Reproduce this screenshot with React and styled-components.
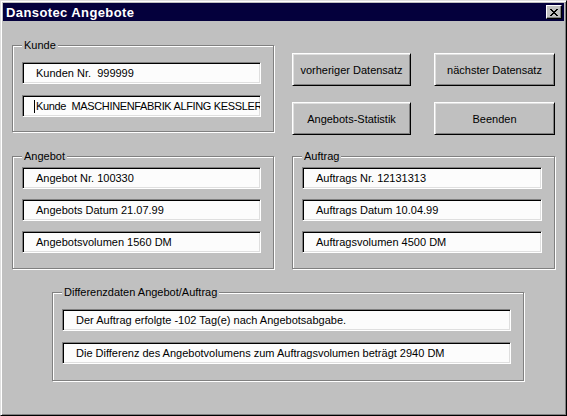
import React from "react";
import styled, { createGlobalStyle } from "styled-components";

const font = `"Liberation Sans", Arial, sans-serif`;

const GlobalStyle = createGlobalStyle`
  html, body {
    margin: 0;
    padding: 0;
    background: #c0c0c0;
  }
`;

const Window = styled.div`
  width: 567px;
  height: 416px;
  box-sizing: border-box;
  background: #c0c0c0;
  border: 1px solid;
  border-color: #dfdfdf #000000 #000000 #dfdfdf;
  box-shadow: inset 1px 1px 0 #ffffff, inset -1px -1px 0 #808080;
  padding: 2px;
  display: flex;
  flex-direction: column;
  font-family: ${font};
  font-size: 11px;
  color: #000000;
`;

const TitleBar = styled.div`
  height: 18px;
  background: #04003c;
  display: flex;
  align-items: center;
  justify-content: space-between;
  padding: 0 2px 0 3px;
`;

const Title = styled.span`
  color: #ffffff;
  font-weight: bold;
  font-size: 13px;
  letter-spacing: 0.4px;
`;

const CloseButton = styled.button`
  width: 16px;
  height: 14px;
  padding: 0;
  box-sizing: border-box;
  background: #c0c0c0;
  border: 1px solid;
  border-color: #ffffff #000000 #000000 #ffffff;
  box-shadow: inset -1px -1px 0 #808080;
  display: flex;
  align-items: center;
  justify-content: center;
`;

const Content = styled.div`
  padding-left: 9px;
  display: flex;
  flex-direction: column;
`;

const Row = styled.div`
  display: flex;
  align-items: flex-start;
  margin-top: ${(p) => p.top || 0}px;
  margin-left: ${(p) => p.left || 0}px;
`;

const GroupBox = styled.div`
  position: relative;
  box-sizing: border-box;
  width: ${(p) => p.w}px;
  height: ${(p) => p.h}px;
  margin-top: ${(p) => p.mt || 0}px;
  margin-left: ${(p) => p.ml || 0}px;
  border: 1px solid #808080;
  box-shadow: 1px 1px 0 #ffffff, inset 1px 1px 0 #ffffff;
  padding: ${(p) => p.pt}px 12px 0 9px;
  display: flex;
  flex-direction: column;
  gap: ${(p) => p.gap}px;
`;

const Legend = styled.span`
  position: absolute;
  top: -7px;
  left: 9px;
  padding: 0 2px;
  line-height: 13px;
  background: #c0c0c0;
`;

const Field = styled.div`
  box-sizing: border-box;
  height: 22px;
  width: 100%;
  background: #fcfcfc;
  border: 1px solid;
  border-color: #808080 #ffffff #ffffff #808080;
  box-shadow: inset 1px 1px 0 #000000, inset -1px -1px 0 #dfdfdf;
  padding-left: 13px;
  display: flex;
  align-items: center;
  white-space: pre;
  overflow: hidden;
  letter-spacing: ${(p) => (p.tight ? "-0.35px" : "normal")};
`;

const Caret = styled.span`
  display: inline-block;
  flex: none;
  width: 1px;
  height: 13px;
  background: #000000;
  margin-left: -2px;
  margin-right: 1px;
`;

const ButtonGrid = styled.div`
  display: grid;
  grid-template-columns: 119px 121px;
  grid-auto-rows: 33px;
  column-gap: 23px;
  row-gap: 16px;
  margin-left: 18px;
  margin-top: 32px;
`;

const Button = styled.button`
  font-family: ${font};
  font-size: 11px;
  color: #000000;
  background: #c0c0c0;
  box-sizing: border-box;
  border: 1px solid;
  border-color: #ffffff #000000 #000000 #ffffff;
  box-shadow: inset 1px 1px 0 #dfdfdf, inset -1px -1px 0 #808080;
  padding: 0;
`;

const App = () => {
  return (
    <>
      <GlobalStyle />
      <Window>
        <TitleBar>
          <Title>Dansotec Angebote</Title>
          <CloseButton aria-label="Schließen">
            <svg width="8" height="7" viewBox="0 0 8 7">
              <path d="M0 0 L7 7 M1 0 L8 7 M7 0 L0 7 M8 0 L1 7" stroke="#000" strokeWidth="1" />
            </svg>
          </CloseButton>
        </TitleBar>
        <Content>
          <Row>
            <GroupBox w={262} h={87} mt={24} pt={16} gap={11}>
              <Legend>Kunde</Legend>
              <Field>Kunden Nr.  999999</Field>
              <Field tight>
                <Caret />
                Kunde  MASCHINENFABRIK ALFING KESSLER
              </Field>
            </GroupBox>
            <ButtonGrid>
              <Button>vorheriger Datensatz</Button>
              <Button>nächster Datensatz</Button>
              <Button>Angebots-Statistik</Button>
              <Button>Beenden</Button>
            </ButtonGrid>
          </Row>
          <Row top={21}>
            <GroupBox w={262} h={113} pt={10} gap={10}>
              <Legend>Angebot</Legend>
              <Field>Angebot Nr. 100330</Field>
              <Field>Angebots Datum 21.07.99</Field>
              <Field>Angebotsvolumen 1560 DM</Field>
            </GroupBox>
            <GroupBox w={263} h={113} ml={18} pt={10} gap={10}>
              <Legend>Auftrag</Legend>
              <Field>Auftrags Nr. 12131313</Field>
              <Field>Auftrags Datum 10.04.99</Field>
              <Field>Auftragsvolumen 4500 DM</Field>
            </GroupBox>
          </Row>
          <Row top={23} left={40}>
            <GroupBox w={472} h={89} pt={16} gap={11}>
              <Legend>Differenzdaten Angebot/Auftrag</Legend>
              <Field>Der Auftrag erfolgte -102 Tag(e) nach Angebotsabgabe.</Field>
              <Field>Die Differenz des Angebotvolumens zum Auftragsvolumen beträgt 2940 DM</Field>
            </GroupBox>
          </Row>
        </Content>
      </Window>
    </>
  );
};

export default App;
